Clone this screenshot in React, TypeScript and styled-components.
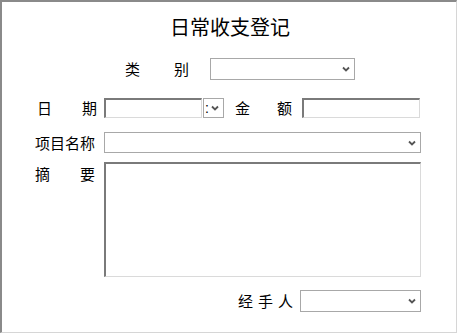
import React from "react";
import styled, { createGlobalStyle } from "styled-components";

const Global = createGlobalStyle`
  html, body { margin: 0; padding: 0; background: #fff; }
  body { font-family: "Noto Sans CJK SC", "Noto Sans", sans-serif; color: #000; }
`;

const Frame = styled.div`
  box-sizing: border-box;
  width: 457px;
  height: 333px;
  border-top: 2px solid #8a8a8a;
  border-left: 2px solid #8a8a8a;
  border-right: 1px solid #d6d6d6;
  border-bottom: 1px solid #d6d6d6;
  padding-top: 13px;
  display: flex;
  flex-direction: column;
`;

const Title = styled.div`
  height: 24px;
  line-height: 24px;
  font-size: 20px;
  text-align: center;
  padding-left: 2px;
`;

const Row = styled.div<{ $top: number; $left: number; $h: number }>`
  display: flex;
  align-items: flex-start;
  margin-top: ${(p) => p.$top}px;
  padding-left: ${(p) => p.$left}px;
  height: ${(p) => p.$h}px;
`;

const Label = styled.span<{ $w: number; $gap: number; $h: number; $ml?: number }>`
  display: inline-block;
  width: ${(p) => p.$w}px;
  margin-left: ${(p) => p.$ml ?? 0}px;
  margin-right: ${(p) => p.$gap}px;
  height: ${(p) => p.$h}px;
  line-height: ${(p) => p.$h}px;
  font-size: 15px;
  text-align: justify;
  text-align-last: justify;
  white-space: nowrap;
  flex: none;
`;

const SpacedLabel = styled.span<{ $gap: number; $h: number }>`
  margin-right: ${(p) => p.$gap}px;
  height: ${(p) => p.$h}px;
  line-height: ${(p) => p.$h}px;
  font-size: 15px;
  letter-spacing: 5px;
  white-space: nowrap;
`;

const Input = styled.div<{ $w: number; $h: number }>`
  box-sizing: border-box;
  width: ${(p) => p.$w}px;
  height: ${(p) => p.$h}px;
  border-top: 2px solid #7a7a7a;
  border-left: 2px solid #7a7a7a;
  border-right: 1px solid #dadada;
  border-bottom: 1px solid #dadada;
  background: #fff;
  flex: none;
`;

const Combo = styled.div<{ $w: number; $h: number; $ml?: number }>`
  box-sizing: border-box;
  width: ${(p) => p.$w}px;
  height: ${(p) => p.$h}px;
  margin-left: ${(p) => p.$ml ?? 0}px;
  border: 1px solid #a8a8a8;
  background: #fff;
  display: flex;
  align-items: center;
  justify-content: flex-end;
  padding-right: 4px;
  flex: none;
`;

const Colon = styled.span`
  font-family: "Liberation Sans", sans-serif;
  font-size: 14px;
  line-height: 14px;
  margin-right: auto;
  padding-left: 1px;
`;

const Chevron = () => (
  <svg width="8" height="6" viewBox="0 0 8 6">
    <path d="M1 1.5 L4 4.5 L7 1.5" fill="none" stroke="#555" strokeWidth="1.8" />
  </svg>
);

export default function App() {
  return (
    <>
      <Global />
      <Frame>
        <Title>日常收支登记</Title>
        <Row $top={19} $left={123} $h={22}>
          <Label $w={64} $gap={21} $h={22}>类别</Label>
          <Combo $w={145} $h={22}>
            <Chevron />
          </Combo>
        </Row>
        <Row $top={18} $left={35} $h={20}>
          <Label $w={60} $gap={7} $h={20}>日期</Label>
          <Input $w={98} $h={20} />
          <Combo $w={21} $h={20} $ml={1}>
            <Colon>:</Colon>
            <Chevron />
          </Combo>
          <Label $w={57} $gap={10} $h={20} $ml={11}>金额</Label>
          <Input $w={118} $h={20} />
        </Row>
        <Row $top={14} $left={33} $h={21}>
          <Label $w={60} $gap={9} $h={21}>项目名称</Label>
          <Combo $w={317} $h={21}>
            <Chevron />
          </Combo>
        </Row>
        <Row $top={9} $left={33} $h={115}>
          <Label $w={60} $gap={9} $h={24}>摘要</Label>
          <Input $w={317} $h={115} />
        </Row>
        <Row $top={13} $left={236} $h={22}>
          <SpacedLabel $gap={2} $h={22}>经手人</SpacedLabel>
          <Combo $w={121} $h={22}>
            <Chevron />
          </Combo>
        </Row>
      </Frame>
    </>
  );
}
